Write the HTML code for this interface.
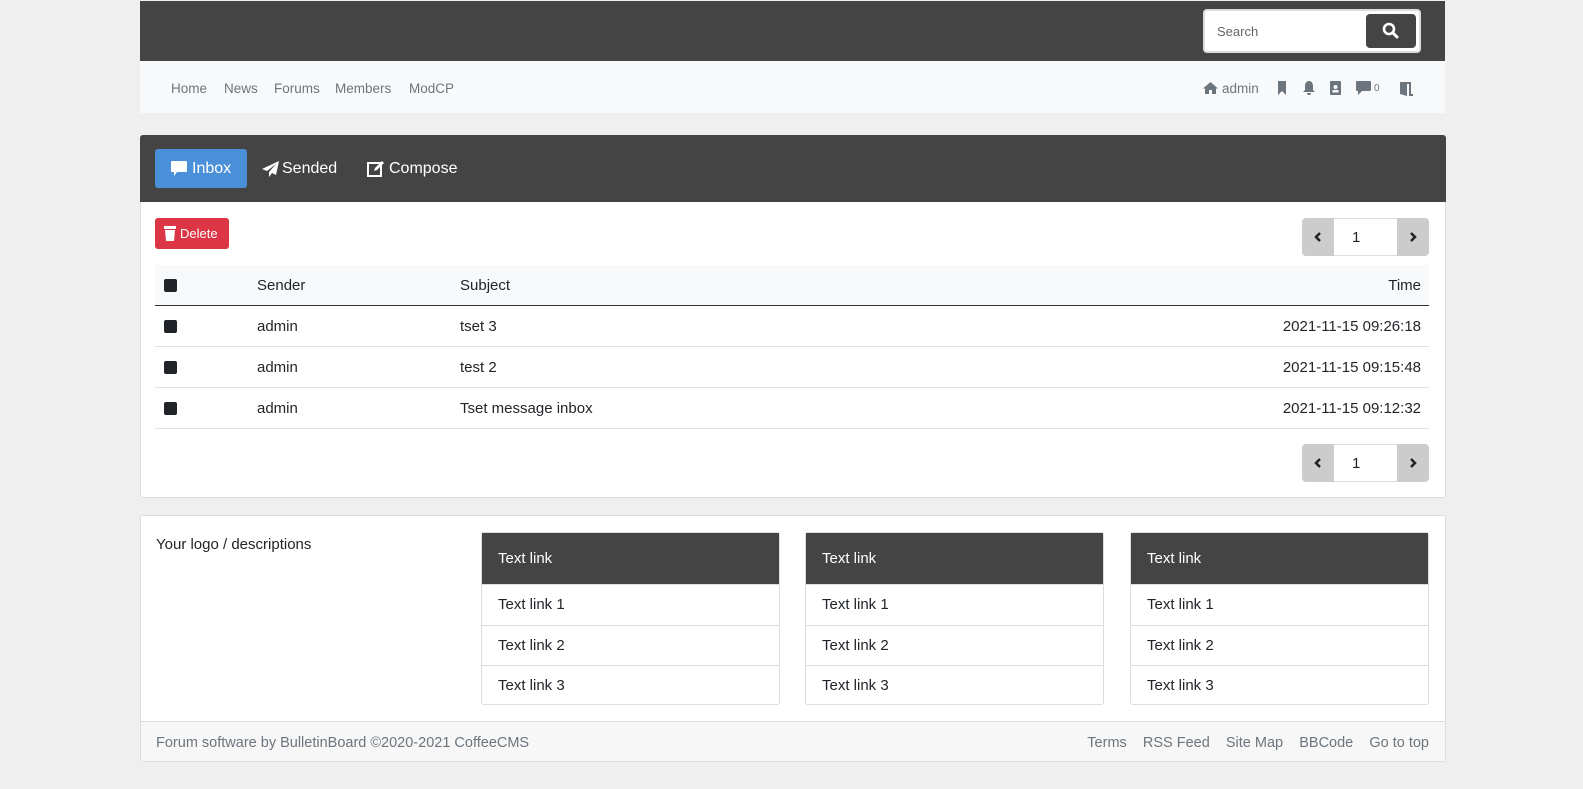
<!DOCTYPE html>
<html><head><meta charset="utf-8"><style>
*{box-sizing:border-box;margin:0;padding:0}
body{width:1583px;height:789px;background:#efefef;font-family:"Liberation Sans",sans-serif;color:#212529;position:relative;overflow:hidden}
.abs{position:absolute}
.top{left:140px;top:1px;width:1305px;height:60px;background:#444}
.search{left:1203px;top:9px;width:218px;height:44px;background:#fff;border-radius:4px;border:2px solid #ddd}
.search span{position:absolute;left:12px;top:13px;font-size:13px;color:#666}
.sbtn{position:absolute;right:3px;top:3px;width:50px;height:34px;background:#444;border-radius:4px}
.nav{left:140px;top:61px;width:1305px;height:52px;background:#f8f9fa;font-size:13.5px;color:#6c757d}
.nav .l{position:absolute;top:20px}
.card{left:140px;top:135px;width:1306px;height:363px;background:#fff;border:1px solid #ddd;border-radius:3px}
.chead{left:140px;top:135px;width:1306px;height:67px;background:#444;border-radius:3px 3px 0 0}
.tab{position:absolute;top:14px;height:39px;color:#fff;font-size:16px;line-height:39px;padding-left:14px}
.del{left:155px;top:218px;width:74px;height:31px;background:#dc3545;border-radius:3px;color:#fff;font-size:13px;line-height:31px;padding-left:25px}
.pg{width:127px;height:38px}
.pg .a,.pg .b{position:absolute;top:0;width:32px;height:38px;background:#ccc}
.pg svg{position:absolute;left:11px;top:14px}
.pg .a{left:0;border-radius:4px 0 0 4px}.pg .b{right:0;border-radius:0 4px 4px 0}
.pg .m{position:absolute;left:32px;top:0;width:63px;height:38px;background:#fff;border-top:1px solid #ddd;border-bottom:1px solid #ddd;font-size:15px;line-height:38px;padding-left:18px}
.row{left:155px;width:1274px;height:41px;border-bottom:1px solid #dee2e6;font-size:15px}
.row span{position:absolute;top:12px}
.cb{position:absolute;left:9px;top:14px;width:13px;height:13px;background:#212529;border-radius:2px}
.foot{left:140px;top:515px;width:1306px;height:247px;background:#fff;border:1px solid #ddd;border-radius:3px}
.fbot{left:141px;top:721px;width:1304px;height:40px;background:#f7f7f7;border-top:1px solid #ddd;font-size:14.5px;color:#6c757d}
.lg{width:299px;height:173px;border:1px solid #ddd;border-radius:3px;background:#fff;font-size:15px}
.lg .h{height:51px;background:#444;color:#fff;padding:17px 16px}
.lg .i{height:40.5px;border-top:1px solid #ddd;padding:11px 16px}
</style></head><body>
<div class="abs top"></div>
<div class="abs search"><span>Search</span><div class="sbtn"><svg width="50" height="34"><circle cx="23" cy="15" r="5" stroke="#fff" stroke-width="2.6" fill="none"/><line x1="27" y1="19" x2="31" y2="23" stroke="#fff" stroke-width="3" stroke-linecap="round"/></svg></div></div>
<div class="abs nav">
<span class="l" style="left:31px">Home</span><span class="l" style="left:84px">News</span><span class="l" style="left:134px">Forums</span><span class="l" style="left:195px">Members</span><span class="l" style="left:269px">ModCP</span>
<svg class="l" style="left:1063px;top:20px" width="15" height="14"><path d="M7.5 1L0 7.5h2V13h4V9h3v4h4V7.5h2z" fill="#6c757d"/></svg>
<span class="l" style="left:1082px">admin</span>
<svg class="l" style="left:1137px;top:20px" width="10" height="14"><path d="M1 0h8v14L5 10 1 14z" fill="#6c757d"/></svg>
<svg class="l" style="left:1163px;top:20px" width="12" height="14"><path d="M6 0c3 0 4 3 4 5v4l2 2H0l2-2V5c0-2 1-5 4-5zM4 12h4a2 2 0 0 1-4 0z" fill="#6c757d"/></svg>
<svg class="l" style="left:1190px;top:20px" width="11" height="14"><rect x="0" y="0" width="11" height="14" rx="1" fill="#6c757d"/><circle cx="5.5" cy="6" r="2" fill="#f8f9fa"/><rect x="2.5" y="9" width="6" height="2.5" fill="#f8f9fa"/></svg>
<svg class="l" style="left:1216px;top:20px" width="15" height="14"><path d="M1 0h13a1 1 0 0 1 1 1v8a1 1 0 0 1-1 1H6l-4 4v-4H1a1 1 0 0 1-1-1V1a1 1 0 0 1 1-1z" fill="#6c757d"/></svg>
<span class="l" style="left:1234px;top:22px;font-size:10px">0</span>
<svg class="l" style="left:1258px;top:20px" width="16" height="15"><path d="M2 1h7v14L2 13z" fill="#6c757d"/><path d="M9 2h3v12h3" stroke="#6c757d" stroke-width="2" fill="none"/></svg>
</div>
<div class="abs card"></div>
<div class="abs chead">
<div class="tab" style="left:15px;width:92px;background:#4a90d9;border-radius:3px;padding-left:37px">Inbox</div>
<svg class="abs" style="left:31px;top:26px" width="16" height="15"><path d="M1 0h14a1 1 0 0 1 1 1v9a1 1 0 0 1-1 1H6l-3 4v-4H1a1 1 0 0 1-1-1V1a1 1 0 0 1 1-1z" fill="#fff"/></svg>
<div class="tab" style="left:128px;padding-left:14px">Sended</div>
<svg class="abs" style="left:122px;top:26px" width="17" height="16"><path d="M17 0L0 8l5 2 9-7-7 8v5l3-4 4 2z" fill="#fff"/></svg>
<div class="tab" style="left:235px;padding-left:14px">Compose</div>
<svg class="abs" style="left:227px;top:25px" width="18" height="17"><rect x="1" y="3" width="13" height="13" fill="none" stroke="#fff" stroke-width="2"/><path d="M7 11l1-3 7-7 2 2-7 7z" fill="#fff"/></svg>
</div>
<div class="abs del">Delete</div>
<svg class="abs" style="left:164px;top:226px" width="12" height="15"><rect x="0" y="0" width="12" height="3" fill="#fff"/><path d="M1 4h10l-1 11H2z" fill="#fff"/></svg>
<div class="abs pg" style="left:1302px;top:218px"><div class="a"><svg width="10" height="10"><path d="M7 1L3 5l4 4" stroke="#222" stroke-width="2.5" fill="none"/></svg></div><div class="m">1</div><div class="b"><svg width="10" height="10"><path d="M3 1l4 4-4 4" stroke="#222" stroke-width="2.5" fill="none"/></svg></div></div>
<div class="abs row" style="top:265px;height:41px;background:#f8f9fa;border-bottom:1px solid #333"><div class="cb"></div><span style="left:102px">Sender</span><span style="left:305px">Subject</span><span style="right:8px">Time</span></div>
<div class="abs row" style="top:306px"><div class="cb"></div><span style="left:102px">admin</span><span style="left:305px">tset 3</span><span style="right:8px">2021-11-15 09:26:18</span></div>
<div class="abs row" style="top:347px"><div class="cb"></div><span style="left:102px">admin</span><span style="left:305px">test 2</span><span style="right:8px">2021-11-15 09:15:48</span></div>
<div class="abs row" style="top:388px"><div class="cb"></div><span style="left:102px">admin</span><span style="left:305px">Tset message inbox</span><span style="right:8px">2021-11-15 09:12:32</span></div>
<div class="abs pg" style="left:1302px;top:444px"><div class="a"><svg width="10" height="10"><path d="M7 1L3 5l4 4" stroke="#222" stroke-width="2.5" fill="none"/></svg></div><div class="m">1</div><div class="b"><svg width="10" height="10"><path d="M3 1l4 4-4 4" stroke="#222" stroke-width="2.5" fill="none"/></svg></div></div>
<div class="abs foot"></div>
<div class="abs" style="left:156px;top:536px;font-size:15px">Your logo / descriptions</div>
<div class="abs lg" style="left:481px;top:532px"><div class="h">Text link</div><div class="i">Text link 1</div><div class="i">Text link 2</div><div class="i">Text link 3</div></div>
<div class="abs lg" style="left:805px;top:532px"><div class="h">Text link</div><div class="i">Text link 1</div><div class="i">Text link 2</div><div class="i">Text link 3</div></div>
<div class="abs lg" style="left:1130px;top:532px"><div class="h">Text link</div><div class="i">Text link 1</div><div class="i">Text link 2</div><div class="i">Text link 3</div></div>
<div class="abs fbot"><span class="abs" style="left:15px;top:13px">Forum software by BulletinBoard ©2020-2021 CoffeeCMS</span>
<span class="abs" style="right:16px;top:13px;word-spacing:0">Terms&nbsp;&nbsp;&nbsp;&nbsp;RSS Feed&nbsp;&nbsp;&nbsp;&nbsp;Site Map&nbsp;&nbsp;&nbsp;&nbsp;BBCode&nbsp;&nbsp;&nbsp;&nbsp;Go to top</span></div>
</body></html>
